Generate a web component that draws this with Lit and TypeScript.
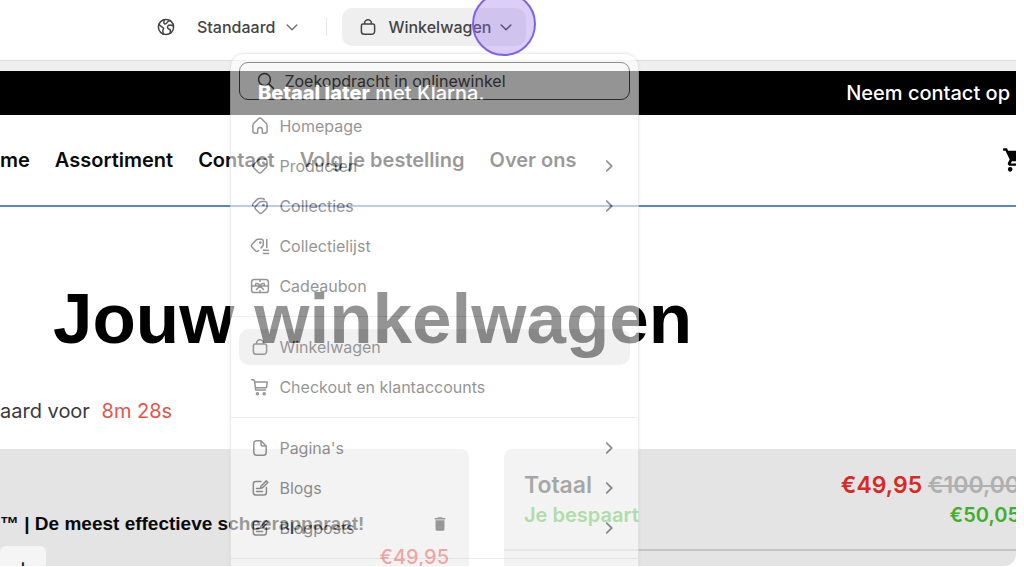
import { LitElement, html, css, svg, nothing, type TemplateResult } from "lit";
import { customElement, property, state } from "lit/decorators.js";
import { classMap } from "lit/directives/class-map.js";

const icons: Record<string, TemplateResult> = {
  globe: svg`<circle cx="10" cy="10" r="7.600"/><path d="M3 7.600l4.200 3.200c.8.7.4 1.600-.2 2.300-.7.8.5 1.600 0 4.200M8 2.800c.6 2-1.200 3 .5 4 1.600.9 2.300-.6 3.200-2 .5-.8 1.300-1.200 2.600-1.200M17.400 9c-2-.9-4.600-1.300-5.600.2-1 1.600.6 2.600 1.800 3 1 .4.800 2.400.4 4"/>`,
  bag: svg`<path d="M3.400 8.500a1.500 1.500 0 0 1 1.500-1.500h10.200a1.500 1.500 0 0 1 1.500 1.500v6a2.800 2.800 0 0 1-2.800 2.800h-7.600a2.800 2.800 0 0 1-2.800-2.800zM6.600 7v-.9a3.400 3.400 0 0 1 6.800 0v.9"/>`,
  chevronDown: svg`<path d="M4 7.500 10 13.500l6-6"/>`,
  chevronRight: svg`<path d="M7.500 4.500 13 10l-5.500 5.500"/>`,
  magnifier: svg`<circle cx="8.500" cy="8.500" r="5.900"/><path d="m12.900 12.900 4.500 4.500"/>`,
  home: svg`<path d="M2.900 9.300c0-.8.3-1.500.9-2.100l4.700-4.500a2.200 2.200 0 0 1 3 0l4.700 4.500c.6.600.9 1.300.9 2.100v5.700a2.200 2.200 0 0 1-2.200 2.200h-1.800a.8.8 0 0 1-.8-.8v-2.600a2.300 2.300 0 0 0-4.600 0v2.600a.8.8 0 0 1-.8.8h-1.800a2.200 2.200 0 0 1-2.200-2.200z"/>`,
  tag: svg`<path d="M10.500 3h4.300a2.200 2.200 0 0 1 2.200 2.200v4.200c0 .8-.3 1.500-.9 2.100l-4.700 4.700a2.300 2.300 0 0 1-3.200 0l-4.500-4.500a2.300 2.300 0 0 1 0-3.200l4.700-4.700c.6-.5 1.300-.8 2.100-.8z"/><circle cx="13.300" cy="6.800" r=".6"/>`,
  tags: svg`<path d="M11.500 5.500h3.300a2.200 2.200 0 0 1 2.200 2.200v3.200c0 .7-.3 1.300-.8 1.800l-4 4a2.200 2.200 0 0 1-3 0l-3.500-3.500a2.200 2.200 0 0 1 0-3l4-4c.5-.4 1.100-.7 1.800-.7z"/><circle cx="13.500" cy="9" r=".6"/><path d="M2.800 9.800c-.4-.9-.2-1.800.5-2.500l3.900-3.900c.6-.5 1.200-.8 2-.8h3.200c.8 0 1.500.3 1.900.9"/>`,
  tagList: svg`<path d="m8.500 14.500-.6.500a1.500 1.500 0 0 1-2.100 0l-3.700-3.800a2 2 0 0 1 0-2.900l4-4.200c.6-.6 1.200-.8 2-.8h3.200a2 2 0 0 1 2 2v3.100c0 .8-.3 1.500-.8 2l-1.500 1.500"/><circle cx="10.300" cy="6.600" r=".6"/><path d="M16.800 3.500v8M13.500 14.200h5M13.500 17.500h5"/>`,
  gift: svg`<rect x="1.600" y="3.400" width="16.800" height="13.200" rx="2.600"/><path d="M1.600 10h16.800M10 10c-1-2.700-4.500-3.400-4.500-1.500S8 10 10 10c1-2.700 4.500-3.400 4.500-1.500S12 10 10 10zm0 0-3.500 3.500M10 10l3.500 3.500M10 3.400v2M10 14.600v2"/>`,
  cart: svg`<path d="M1.600 2.800h1.500c.8 0 1.400.6 1.500 1.300l1 8.900h9.900M4.900 5h12.300l-.7 5.700H5.400"/><circle cx="7.400" cy="16.800" r="1"/><circle cx="14.200" cy="16.800" r="1"/>`,
  page: svg`<path d="M11 2.800H6.500a2.700 2.700 0 0 0-2.700 2.700v9a2.700 2.700 0 0 0 2.700 2.700h7a2.700 2.700 0 0 0 2.700-2.700V8zM11 2.800V6.500A1.500 1.500 0 0 0 12.500 8h3.700"/>`,
  blog: svg`<path d="M11 3.500H5.800a2.500 2.500 0 0 0-2.500 2.500v8.600a2.500 2.500 0 0 0 2.500 2.500h8.100a2.500 2.500 0 0 0 2.500-2.500V9.500M6.500 10.400h3M6.500 13.600h6M10.500 10.200l.4-2 5.300-5.300 1.600 1.600-5.300 5.300z"/>`,
};

const icon = (name: string) =>
  html`<svg class="icon ${name}" viewBox="0 0 20 20" aria-hidden="true">${icons[name]}</svg>`;

interface MenuEntry {
  label: string;
  icon: string;
  more?: boolean;
}

const menuGroups: MenuEntry[][] = [
  [
    { label: "Homepage", icon: "home" },
    { label: "Producten", icon: "tag", more: true },
    { label: "Collecties", icon: "tags", more: true },
    { label: "Collectielijst", icon: "tagList" },
    { label: "Cadeaubon", icon: "gift" },
  ],
  [
    { label: "Winkelwagen", icon: "bag" },
    { label: "Checkout en klantaccounts", icon: "cart" },
  ],
  [
    { label: "Pagina's", icon: "page", more: true },
    { label: "Blogs", icon: "blog", more: true },
    { label: "Blogposts", icon: "blog", more: true },
  ],
  [],
];

const iconStyles = css`
  .icon {
    display: block;
    flex: none;
    width: 20px;
    height: 20px;
    fill: none;
    stroke: currentColor;
    stroke-width: 1.5;
    stroke-linecap: round;
    stroke-linejoin: round;
  }
`;

@customElement("template-menu")
export class TemplateMenu extends LitElement {
  @property() current = "";

  static styles = [
    iconStyles,
    css`
      :host {
        display: block;
        box-sizing: border-box;
        padding: 8px;
        border: 1px solid #e0e0e0;
        border-radius: 14px;
        background: #fff;
        box-shadow: 0 0 3px rgba(0, 0, 0, 0.12);
        color: #4a4a4a;
        opacity: 0.58;
      }
      .search {
        display: flex;
        align-items: center;
        gap: 8px;
        height: 36px;
        padding: 0 16px;
        border: 1px solid #4a4a4a;
        border-radius: 9px;
        margin-bottom: 8px;
      }
      .search input {
        flex: 1;
        min-width: 0;
        border: 0;
        padding: 0;
        outline: 0;
        background: none;
        font: 16px/20px Inter, sans-serif;
      }
      .search input::placeholder {
        color: #4a4a4a;
        opacity: 1;
      }
      ul {
        display: grid;
        gap: 4px;
        margin: 0;
        padding: 0;
        list-style: none;
      }
      ul + ul {
        margin: 12px -8px 0;
        padding: 12px 8px 0;
        border-top: 1px solid #e3e3e3;
      }
      button {
        display: flex;
        align-items: center;
        gap: 9px;
        width: 100%;
        height: 36px;
        padding: 0 12px 0 11px;
        border: 0;
        border-radius: 10px;
        background: none;
        color: inherit;
        font: 16px/20px Inter, sans-serif;
        text-align: left;
      }
      button.current {
        background: #e8e8e8;
      }
      .label {
        flex: 1;
      }
      .chevronRight {
        width: 18px;
        height: 18px;
        stroke-width: 2;
      }
    `,
  ];

  private renderEntry(entry: MenuEntry) {
    const current = entry.label === this.current;
    return html`<li>
      <button class=${classMap({ current })} aria-current=${current ? "page" : nothing}>
        ${icon(entry.icon)}<span class="label">${entry.label}</span>
        ${entry.more ? icon("chevronRight") : nothing}
      </button>
    </li>`;
  }

  render() {
    return html`
      <label class="search">
        ${icon("magnifier")}
        <input type="text" aria-label="Zoekopdracht in onlinewinkel" placeholder="Zoekopdracht in onlinewinkel" />
      </label>
      ${menuGroups.map((group) => html`<ul>${group.map((entry) => this.renderEntry(entry))}</ul>`)}
    `;
  }
}

@customElement("shop-preview")
export class ShopPreview extends LitElement {
  static styles = css`
    :host {
      display: block;
      overflow: hidden;
      background: #fff;
      color: #0a0a0a;
      font-family: Inter, sans-serif;
    }
    .page {
      margin-right: -24px;
    }
    .announcement {
      display: flex;
      justify-content: space-between;
      align-items: center;
      height: 44px;
      padding: 0 30px 0 258px;
      background: #000;
      color: #fff;
      font-size: 20px;
      font-weight: 500;
      line-height: 24px;
    }
    .announcement p {
      margin: 0;
    }
    .announcement strong {
      font-weight: 800;
    }
    header {
      display: flex;
      justify-content: space-between;
      align-items: center;
      height: 90px;
      padding-right: 10px;
      border-bottom: 2px solid #5a86cf;
    }
    nav {
      display: flex;
      gap: 25px;
    }
    nav a {
      color: inherit;
      font-size: 20px;
      font-weight: 600;
      line-height: 24px;
      text-decoration: none;
    }
    .cart {
      padding: 0;
      border: 0;
      background: none;
      color: #000;
    }
    .cart svg {
      display: block;
      width: 28px;
      height: 28px;
    }
    svg {
      fill: currentColor;
    }
    h1 {
      margin: 72px 0 0 53px;
      color: #000;
      font: bold 71px/80px "Liberation Sans", sans-serif;
    }
    .timer {
      margin: 40px 0 26px;
      color: #3a3a3a;
      font-size: 20px;
      line-height: 24px;
    }
    .timer time {
      margin-left: 6px;
      color: #e0574b;
    }
    .columns {
      display: grid;
      grid-template-columns: 7fr 8fr;
      gap: 35px;
    }
    section {
      min-height: 140px;
      background: #e4e4e4;
    }
    .items {
      border-radius: 0 8px 0 0;
      padding: 63px 20px 0 0;
      box-sizing: border-box;
    }
    .row {
      display: flex;
      justify-content: space-between;
      align-items: center;
    }
    h2 {
      margin: 0;
      font: bold 19px/24px "Liberation Sans", sans-serif;
    }
    .remove {
      padding: 0;
      border: 0;
      background: none;
      color: #0a0a0a;
    }
    .remove svg {
      display: block;
      width: 18px;
      height: 18px;
    }
    .amount {
      display: flex;
      justify-content: space-between;
      padding-top: 8px;
    }
    .plus {
      width: 46px;
      height: 40px;
      margin-top: 2px;
      padding: 0;
      border: 0;
      border-radius: 6px;
      background: #f5f5f5;
      color: #222;
      font: 500 20px/40px Inter, sans-serif;
    }
    .price {
      color: #dd2a22;
      font-size: 20px;
      font-weight: 500;
      line-height: 26px;
    }
    .totals {
      border-radius: 8px 0 0 0;
    }
    .sums {
      padding: 20px;
      border-bottom: 2px solid #c4c4c4;
      font-weight: 600;
    }
    .total {
      color: #2c2c2c;
      font-size: 23px;
      line-height: 32px;
    }
    .total ins {
      color: #d62a22;
      text-decoration: none;
    }
    .total del {
      color: #b0b0b0;
    }
    .saving {
      color: #3fae2e;
      font-size: 20px;
      line-height: 28px;
    }
  `;

  render() {
    return html`
      <div class="page">
        <div class="announcement">
          <p><strong>Betaal later</strong> met Klarna.</p>
          <p>Neem contact op</p>
        </div>
        <header>
          <nav>
            ${["me", "Assortiment", "Contact", "Volg je bestelling", "Over ons"].map(
              (label) => html`<a href="#">${label}</a>`,
            )}
          </nav>
          <button class="cart" aria-label="Winkelwagen">
            <svg viewBox="0 0 24 24">
              <path d="M7 18a2 2 0 1 0 0 4 2 2 0 0 0 0-4zM1 2v2h2l3.600 7.600-1.350 2.450C4.500 15.400 5.500 17 7 17h12v-2H7.400l1.100-2h7.450c.75 0 1.400-.4 1.750-1L21.300 5.500A1 1 0 0 0 20.400 4H5.200l-.9-2zm16 16a2 2 0 1 0 0 4 2 2 0 0 0 0-4z" />
            </svg>
          </button>
        </header>
        <h1>Jouw winkelwagen</h1>
        <p class="timer">aard voor <time>8m 28s</time></p>
        <div class="columns">
          <section class="items">
            <div class="row">
              <h2>™ | De meest effectieve scheerapparaat!</h2>
              <button class="remove" aria-label="Verwijderen">
                <svg viewBox="0 0 24 24"><path d="M6 19a2 2 0 0 0 2 2h8a2 2 0 0 0 2-2V7H6zM19 4h-3.500l-1-1h-5l-1 1H5v2h14z" /></svg>
              </button>
            </div>
            <div class="amount">
              <button class="plus" aria-label="Meer">+</button>
              <span class="price">€49,95</span>
            </div>
          </section>
          <section class="totals">
            <div class="sums">
              <div class="row total"><span>Totaal</span><span><ins>€49,95</ins> <del>€100,00</del></span></div>
              <div class="row saving"><span>Je bespaart</span><span>€50,05</span></div>
            </div>
          </section>
        </div>
      </div>
    `;
  }
}

@customElement("app-root")
export class AppRoot extends LitElement {
  @state() private menuOpen = true;

  static styles = [
    iconStyles,
    css`
      :host {
        display: block;
        height: 100vh;
        overflow: hidden;
        background: #fff;
        font-family: Inter, sans-serif;
      }
      .window {
        display: flex;
        flex-direction: column;
        box-sizing: border-box;
        height: calc(100vh - 1px);
        margin-right: 8px;
        overflow: hidden;
        border-radius: 0 0 12px 0;
      }
      .toolbar {
        position: relative;
        z-index: 1;
        display: flex;
        align-items: center;
        gap: 15px;
        flex: none;
        height: 60px;
        padding: 0 0 6px 147px;
        box-sizing: border-box;
        background: #fff;
      }
      .toolbar button {
        display: flex;
        align-items: center;
        height: 38px;
        border: 0;
        border-radius: 10px;
        background: none;
        color: #444;
        font: 500 16px/20px Inter, sans-serif;
      }
      .market {
        gap: 9px;
        padding: 0 11px 0 9px;
      }
      .market .globe {
        margin-right: 12px;
      }
      .separator {
        width: 1px;
        height: 18px;
        background: #e6e6e6;
      }
      .picker {
        position: relative;
      }
      .toolbar .template {
        gap: 7px;
        padding: 0 12px 0 16px;
        background: #efefef;
      }
      .template .bag {
        margin-right: 3px;
      }
      .toolbar .chevronDown {
        width: 16px;
        height: 16px;
        stroke-width: 2;
      }
      .market .chevronDown {
        color: #777;
      }
      template-menu {
        position: absolute;
        top: 45px;
        left: -112px;
        width: 409px;
      }
      .pointer {
        position: absolute;
        top: -16px;
        right: -10px;
        width: 60px;
        height: 60px;
        border: 2px solid #8260ea;
        border-radius: 50%;
        background: rgba(150, 110, 235, 0.34);
      }
      .canvas {
        flex: 1;
        min-height: 0;
        overflow: hidden;
        border-top: 1px solid #dedede;
        padding-top: 10px;
        background: #efefef;
      }
    `,
  ];

  render() {
    return html`
      <div class="window">
        <div class="toolbar">
          <button class="market">${icon("globe")}<span>Standaard</span>${icon("chevronDown")}</button>
          <span class="separator"></span>
          <div class="picker">
            <button
              class="template"
              aria-expanded=${this.menuOpen ? "true" : "false"}
              @click=${() => (this.menuOpen = !this.menuOpen)}
            >
              ${icon("bag")}<span>Winkelwagen</span>${icon("chevronDown")}
            </button>
            ${this.menuOpen ? html`<template-menu current="Winkelwagen"></template-menu>` : nothing}
            <span class="pointer"></span>
          </div>
        </div>
        <main class="canvas"><shop-preview></shop-preview></main>
      </div>
    `;
  }
}
